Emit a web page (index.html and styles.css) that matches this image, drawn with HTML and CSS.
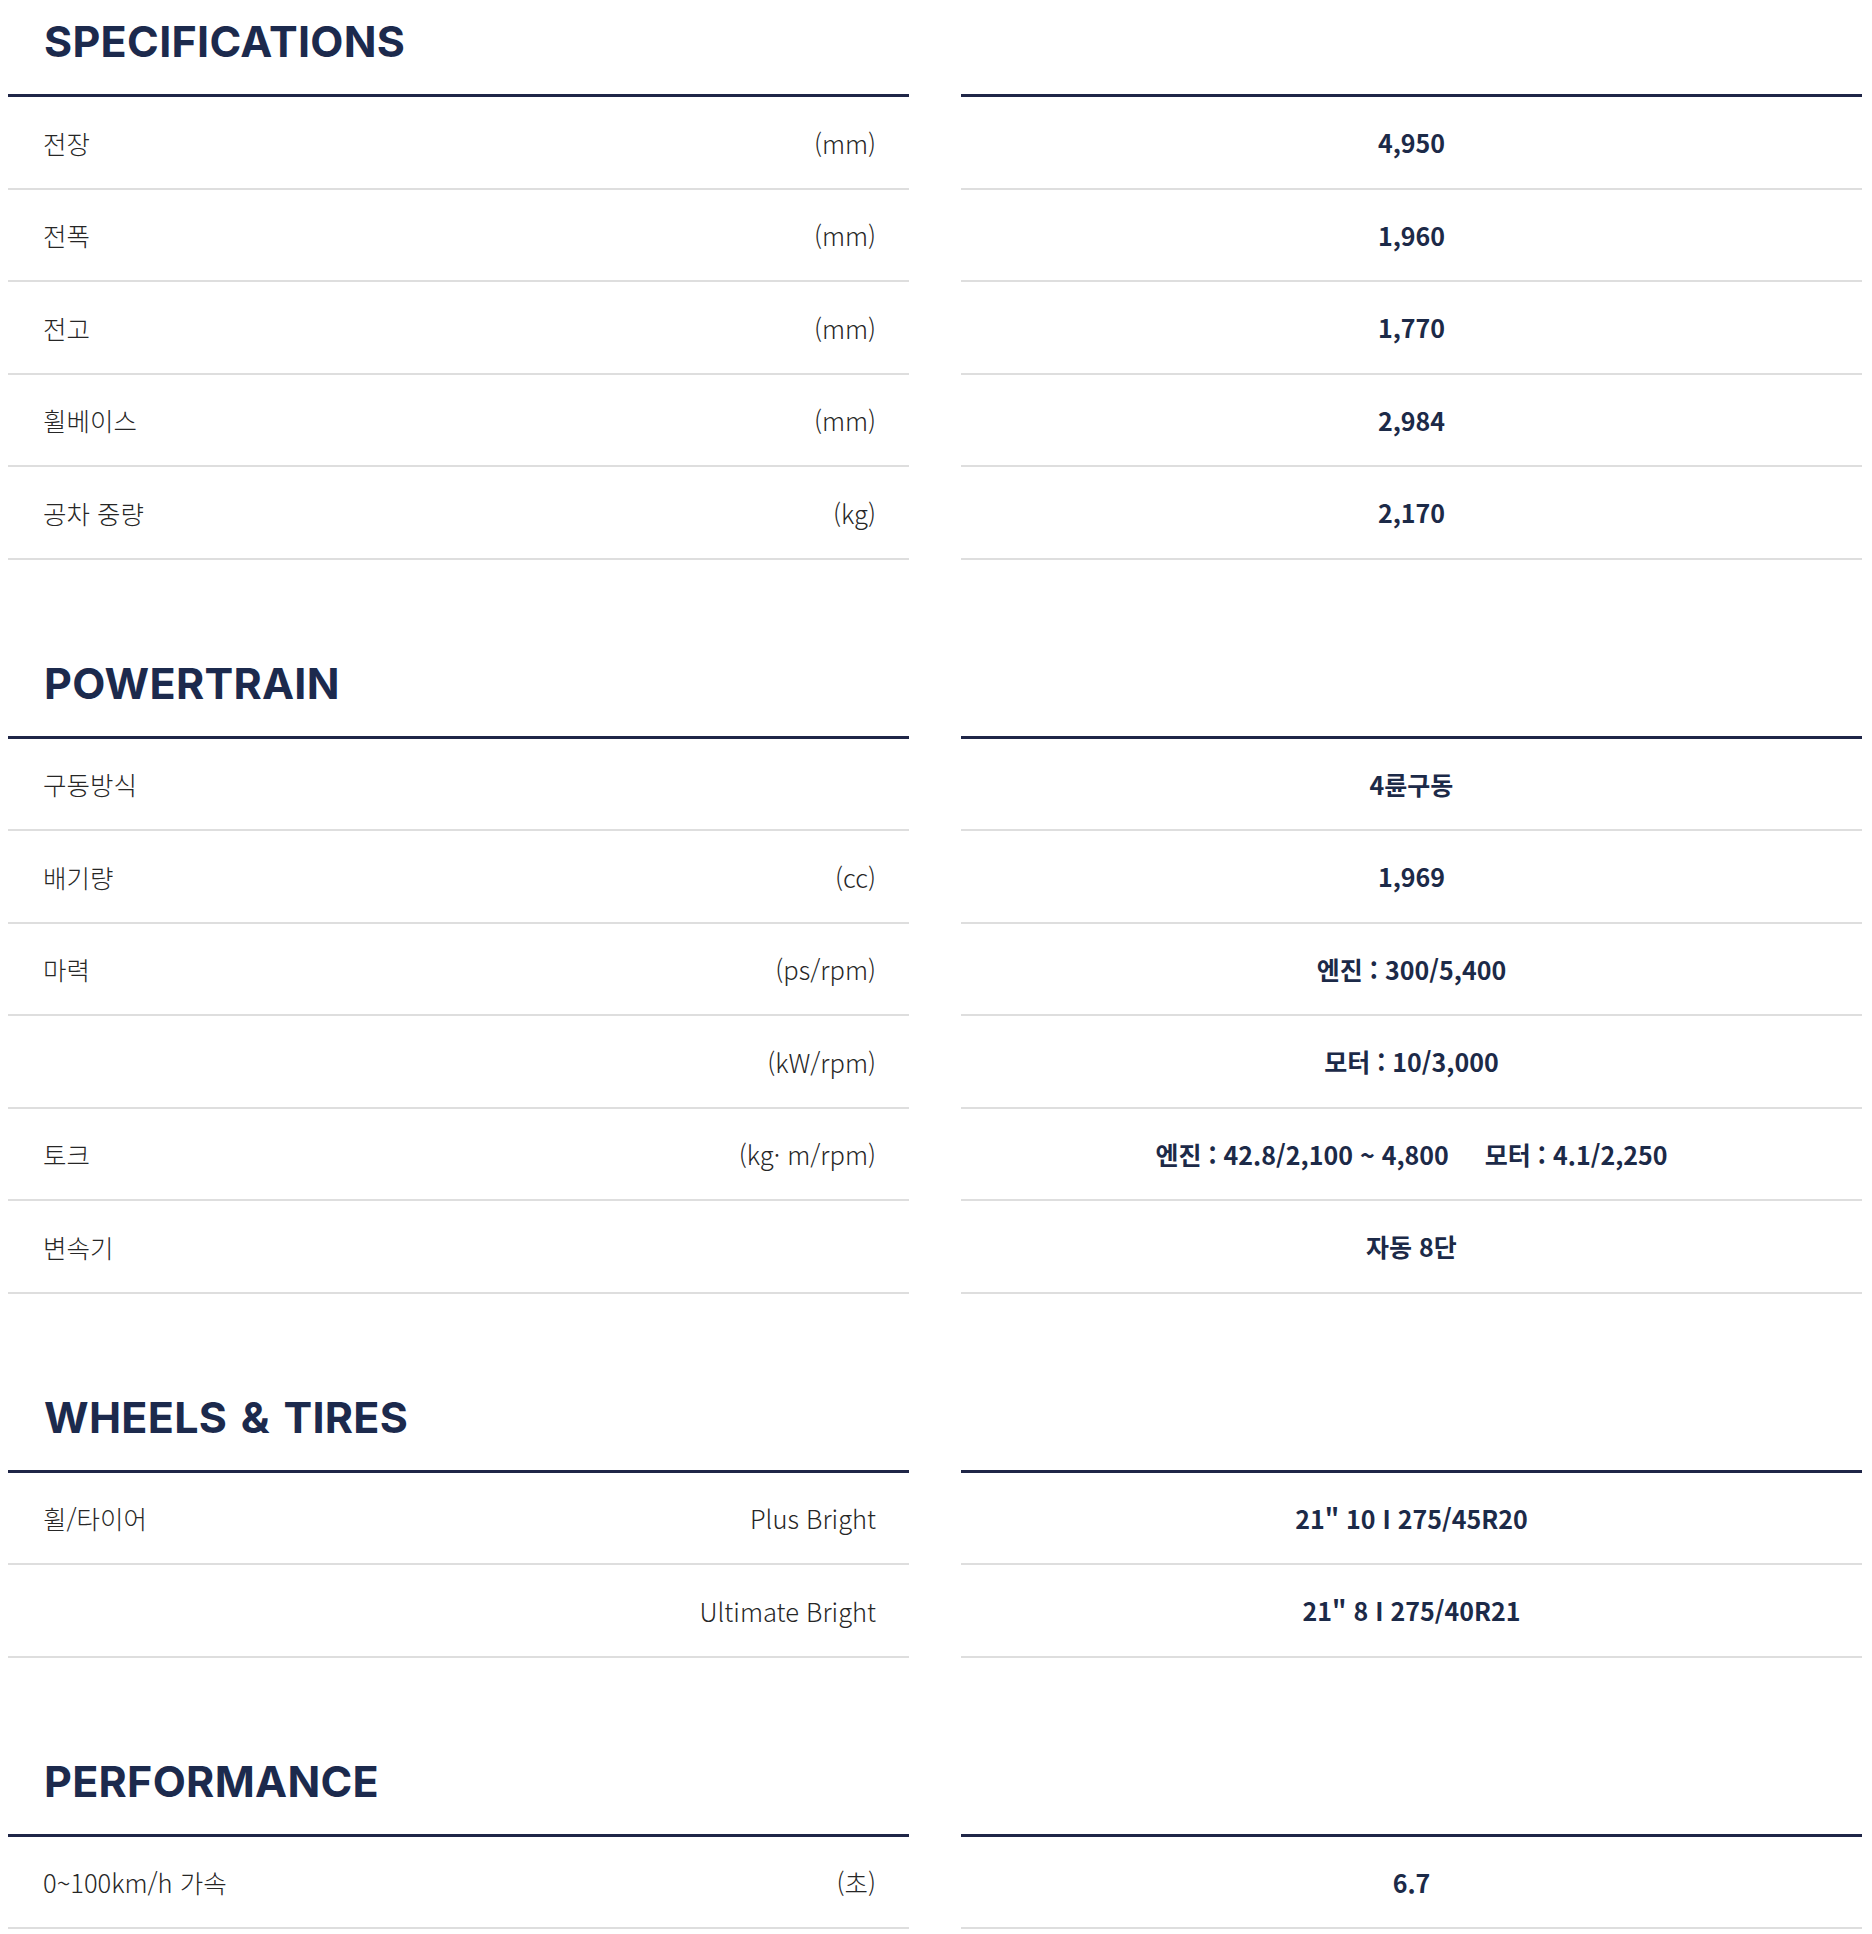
FILE: index.html
```html
<!DOCTYPE html>
<html lang="ko">
<head>
<meta charset="utf-8">
<title>Specifications</title>
<link rel="stylesheet" href="styles.css">
</head>
<body>
<main class="specs">
  <section class="spec-section">
    <h2 class="spec-title">SPECIFICATIONS</h2>
    <div class="spec-table">
      <div class="spec-col">
        <div class="spec-row"><span class="label">전장</span><span class="unit">(mm)</span></div>
        <div class="spec-row"><span class="label">전폭</span><span class="unit">(mm)</span></div>
        <div class="spec-row"><span class="label">전고</span><span class="unit">(mm)</span></div>
        <div class="spec-row"><span class="label">휠베이스</span><span class="unit">(mm)</span></div>
        <div class="spec-row"><span class="label">공차 중량</span><span class="unit">(kg)</span></div>
      </div>
      <div class="spec-col spec-col--values">
        <div class="spec-row"><span class="value">4,950</span></div>
        <div class="spec-row"><span class="value">1,960</span></div>
        <div class="spec-row"><span class="value">1,770</span></div>
        <div class="spec-row"><span class="value">2,984</span></div>
        <div class="spec-row"><span class="value">2,170</span></div>
      </div>
    </div>
  </section>

  <section class="spec-section">
    <h2 class="spec-title">POWERTRAIN</h2>
    <div class="spec-table">
      <div class="spec-col">
        <div class="spec-row"><span class="label">구동방식</span><span class="unit"></span></div>
        <div class="spec-row"><span class="label">배기량</span><span class="unit">(cc)</span></div>
        <div class="spec-row"><span class="label">마력</span><span class="unit">(ps/rpm)</span></div>
        <div class="spec-row"><span class="label"></span><span class="unit">(kW/rpm)</span></div>
        <div class="spec-row"><span class="label">토크</span><span class="unit">(kg· m/rpm)</span></div>
        <div class="spec-row"><span class="label">변속기</span><span class="unit"></span></div>
      </div>
      <div class="spec-col spec-col--values">
        <div class="spec-row"><span class="value">4륜구동</span></div>
        <div class="spec-row"><span class="value">1,969</span></div>
        <div class="spec-row"><span class="value">엔진 : 300/5,400</span></div>
        <div class="spec-row"><span class="value">모터 : 10/3,000</span></div>
        <div class="spec-row"><span class="value">엔진 : 42.8/2,100 ~ 4,800</span><span class="value value--second">모터 : 4.1/2,250</span></div>
        <div class="spec-row"><span class="value">자동 8단</span></div>
      </div>
    </div>
  </section>

  <section class="spec-section">
    <h2 class="spec-title">WHEELS &amp; TIRES</h2>
    <div class="spec-table">
      <div class="spec-col">
        <div class="spec-row"><span class="label">휠/타이어</span><span class="unit">Plus Bright</span></div>
        <div class="spec-row"><span class="label"></span><span class="unit">Ultimate Bright</span></div>
      </div>
      <div class="spec-col spec-col--values">
        <div class="spec-row"><span class="value">21" 10 I 275/45R20</span></div>
        <div class="spec-row"><span class="value">21" 8 I 275/40R21</span></div>
      </div>
    </div>
  </section>

  <section class="spec-section">
    <h2 class="spec-title">PERFORMANCE</h2>
    <div class="spec-table">
      <div class="spec-col">
        <div class="spec-row"><span class="label">0~100km/h 가속</span><span class="unit">(초)</span></div>
      </div>
      <div class="spec-col spec-col--values">
        <div class="spec-row"><span class="value">6.7</span></div>
      </div>
    </div>
  </section>
</main>
</body>
</html>
```

FILE: styles.css
```css
html, body {
  margin: 0;
  padding: 0;
  background: #ffffff;
}

body {
  font-family: "Noto Sans CJK KR", "Noto Sans", sans-serif;
  color: #2b2b2b;
}

.specs {
  padding: 0 8px;
}

.spec-section + .spec-section {
  margin-top: 82px;
}

.spec-title {
  box-sizing: border-box;
  height: 94px;
  margin: 0;
  padding: 20px 0 0 36px;
  font-family: "Inter", "Roboto", sans-serif;
  font-weight: 700;
  font-size: 43px;
  line-height: 43px;
  letter-spacing: 0.3px;
  word-spacing: 3px;
  color: #1c2a4d;
}

.spec-table {
  display: grid;
  grid-template-columns: 901px 901px;
  column-gap: 52px;
}

.spec-col {
  border-top: 3px solid #1f2647;
}

.spec-row {
  display: flex;
  align-items: center;
  justify-content: space-between;
  height: 92.5px;
  box-sizing: border-box;
  padding: 0 33px 0 35px;
  border-bottom: 2px solid #dedede;
}

.spec-col--values .spec-row {
  justify-content: center;
  padding: 0;
}

.label,
.unit {
  font-size: 25.5px;
  font-weight: 300;
  color: #262626;
}

.value {
  font-size: 25px;
  font-weight: 700;
  color: #1c2a48;
}

.value--second {
  margin-left: 36px;
}
```
